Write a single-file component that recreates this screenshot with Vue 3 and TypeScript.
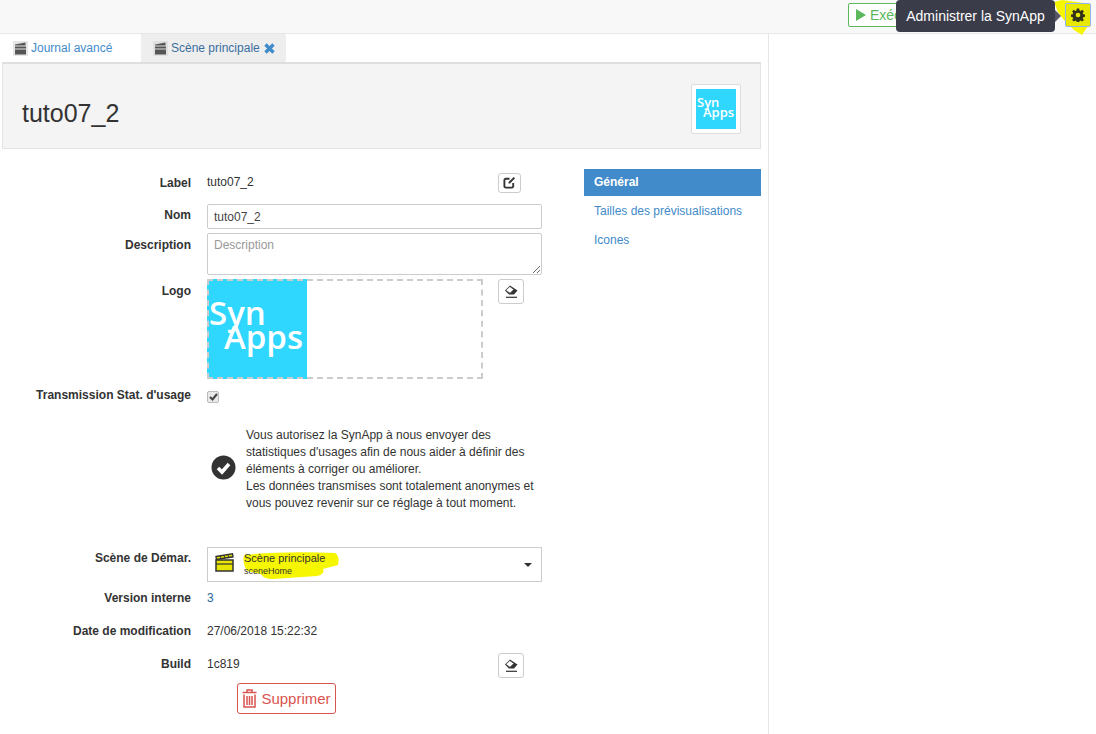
<script setup lang="ts">
const paragraphLines: string[] = [
  "Vous autorisez la SynApp à nous envoyer des",
  "statistiques d'usages afin de nous aider à définir des",
  "éléments à corriger ou améliorer.",
  "Les données transmises sont totalement anonymes et",
  "vous pouvez revenir sur ce réglage à tout moment.",
];
</script>

<template>
  <div class="page">
    <header class="topbar">
      <button class="run"><svg class="play" width="10" height="12" viewBox="0 0 10 12"><path d="M0 0L10 6L0 12Z" fill="#5cb85c" /></svg>Exécuter</button>
      <div class="tooltip">Administrer la SynApp</div>
      <button class="gear">
        <svg width="14" height="14" viewBox="0 0 24 24"><path fill="#33331a" fill-rule="evenodd" d="M10 1h4l.6 3.2 1.9.8 2.7-1.8 2.800 2.800-1.800 2.700.8 1.900 3 .6v4l-3 .6-.8 1.900 1.800 2.700-2.800 2.800-2.700-1.800-1.900.8-.6 3h-4l-.6-3-1.900-.8-2.700 1.800-2.800-2.800 1.800-2.700-.8-1.900-3-.6v-4l3-.6.8-1.900-1.800-2.700 2.800-2.800 2.700 1.800 1.900-.8zM12 8a4 4 0 100 8 4 4 0 000-8z" /></svg>
      </button>
      <svg class="mark-top" width="40" height="36" viewBox="0 0 40 36"><path d="M0 2L8 0L30 3L34 26L28 35L20 30L16 26L10 20L4 12Z" fill="#f6f600" /></svg>
    </header>

    <div class="body">
      <main class="main">
        <nav class="tabs">
          <a class="tab">
            <svg class="clap" width="15" height="15" viewBox="0 0 15 15"><rect width="15" height="15" fill="#e6e6e6" /><path d="M2 3.500L12.500 1.500V4.500H2zM2 5.500h11v8H2z" fill="#555" /><path d="M2 8h11" stroke="#e6e6e6" /></svg>
            Journal avancé
          </a>
          <a class="tab active">
            <svg class="clap" width="15" height="15" viewBox="0 0 15 15"><rect width="15" height="15" fill="#e0e0e0" /><path d="M2 3.500L12.500 1.500V4.500H2zM2 5.500h11v8H2z" fill="#555" /><path d="M2 8h11" stroke="#e0e0e0" /></svg>
            Scène principale
            <svg class="close" width="11" height="11" viewBox="0 0 11 11"><path d="M1.500 1.500L9.500 9.500M9.500 1.500L1.500 9.500" stroke="#428bca" stroke-width="3.400" /></svg>
          </a>
        </nav>

        <section class="hero">
          <h1>tuto07_2</h1>
          <div class="thumb"><div class="logo small"><span class="syn">Syn</span><span class="apps">Apps</span></div></div>
        </section>

        <div class="content">
          <form class="form" @submit.prevent>
            <div class="row r-label">
              <label>Label</label>
              <div class="val between">
                <span>tuto07_2</span>
                <button class="tool tool-sm">
                  <svg width="13" height="13" viewBox="0 0 14 14"><path d="M11 7.500V11a1.500 1.500 0 01-1.500 1.500H3A1.500 1.500 0 011.500 11V4.500A1.500 1.500 0 013 3h4" fill="none" stroke="#333" stroke-width="2" /><path d="M6 6.500L11.500 1l1.500 1.500L7.500 8H6z" fill="#333" /></svg>
                </button>
              </div>
            </div>
            <div class="row r-name">
              <label>Nom</label>
              <input class="field" value="tuto07_2" />
            </div>
            <div class="row r-desc">
              <label>Description</label>
              <textarea class="field area" placeholder="Description"></textarea>
            </div>
            <div class="row r-logo">
              <label>Logo</label>
              <div class="val between top">
                <div class="drop"><div class="logo big"><span class="syn">Syn</span><span class="apps">Apps</span></div></div>
                <button class="tool tool-lg">
                  <svg width="15" height="15" viewBox="0 0 15 15"><path d="M1 6.500L6 1.500L13.500 6.500L10 10.500H5Z" fill="#333" /><path d="M1.800 6.300L5.800 2.500L9.800 5.500L6 9.300Z" fill="#fff" stroke="#333" stroke-width=".6" /><path d="M2 13.300h11" stroke="#333" stroke-width="1.200" /></svg>
                </button>
              </div>
            </div>
            <div class="row r-stat">
              <label>Transmission Stat. d'usage</label>
              <div class="val"><span class="check">
                <svg width="9" height="8" viewBox="0 0 9 8"><path d="M1 4L3.500 6.500L8 1" fill="none" stroke="#444" stroke-width="2" /></svg>
              </span></div>
            </div>
            <div class="row r-info">
              <span></span>
              <div class="info">
                <svg class="round" width="25" height="25" viewBox="0 0 25 25"><circle cx="12.500" cy="12.500" r="12" fill="#333" /><path d="M7 13L11 17L18 9" fill="none" stroke="#fff" stroke-width="3.600" /></svg>
                <p><template v-for="line in paragraphLines" :key="line">{{ line }}<br /></template></p>
              </div>
            </div>
            <div class="row r-scene">
              <label>Scène de Démar.</label>
              <div class="select">
                <span class="scene-wrap">
                  <svg class="mark" width="98" height="28" viewBox="0 0 98 28"><path d="M1 3Q40 -1 92 1Q97 4 95 13L80 17Q82 22 74 24L30 27Q20 27 18 22L4 19Q-1 10 1 3Z" fill="#f6f600" /></svg>
                  <svg class="scene-ico" width="19" height="19" viewBox="0 0 19 19"><path d="M1 3.500L17.500 .8L18 3.800L1.500 6.500Z" fill="#e6e600" stroke="#333" stroke-width="1.400" /><path d="M5 3L6 5.500M9 2.500L10 5M13 2L14 4.500" stroke="#333" /><rect x="1" y="7" width="17" height="11" fill="#e6e600" stroke="#333" stroke-width="1.500" /><path d="M1 11h17" stroke="#333" stroke-width="1.200" /></svg>
                  <span class="scene-text"><b>Scène principale</b><small>sceneHome</small></span>
                </span>
                <i class="caret"></i>
              </div>
            </div>
            <div class="row r-ver"><label>Version interne</label><div class="val link">3</div></div>
            <div class="row r-date"><label>Date de modification</label><div class="val">27/06/2018 15:22:32</div></div>
            <div class="row r-build">
              <label>Build</label>
              <div class="val between top">
                <span class="build-no">1c819</span>
                <button class="tool tool-lg">
                  <svg width="15" height="15" viewBox="0 0 15 15"><path d="M1 6.500L6 1.500L13.500 6.500L10 10.500H5Z" fill="#333" /><path d="M1.800 6.300L5.800 2.500L9.800 5.500L6 9.300Z" fill="#fff" stroke="#333" stroke-width=".6" /><path d="M2 13.300h11" stroke="#333" stroke-width="1.200" /></svg>
                </button>
              </div>
            </div>
            <button class="danger">
              <svg width="15" height="19" viewBox="0 0 15 19"><path d="M5 3V1h5v2M.5 3.500h14M2 5.500V18h11V5.500M5 7v9M7.500 7v9M10 7v9" fill="none" stroke="#d9534f" stroke-width="1.500" /></svg>
              Supprimer
            </button>
          </form>

          <aside class="side">
            <a class="on">Général</a>
            <a>Tailles des prévisualisations</a>
            <a>Icones</a>
          </aside>
        </div>
      </main>
      <aside class="right"></aside>
    </div>
  </div>
</template>

<style>
html, body { margin: 0; background: #fff; }
</style>

<style scoped>
.page { width: 1096px; height: 734px; overflow: hidden; font: 12px/17px "Liberation Sans", Arial, sans-serif; color: #333; }
.topbar { position: relative; z-index: 2; height: 34px; box-sizing: border-box; background: #f8f8f8; border-bottom: 1px solid #e7e7e7; display: flex; align-items: flex-start; padding: 3px 5px 0 848px; }
.run { height: 24px; width: 70px; flex: none; padding: 0 0 0 7px; box-sizing: border-box; border: 1px solid #5cb85c; border-radius: 2px; background: #fff; color: #5cb85c; font: 14px "Liberation Sans", Arial, sans-serif; display: flex; align-items: center; gap: 4px; white-space: nowrap; overflow: hidden; }
.play { flex: none; }
.tooltip { position: absolute; left: 896px; top: 0; width: 159px; height: 32px; background: #3a3c4a; color: #fff; border-radius: 4px; font-size: 14px; line-height: 32px; text-align: center; z-index: 3; }
.tooltip::after { content: ""; position: absolute; left: 100%; top: 10px; border: 6px solid transparent; border-left-color: #3a3c4a; border-right-width: 0; opacity: .85; }
.gear { position: absolute; right: 5px; top: 3px; width: 26px; height: 24px; box-sizing: border-box; z-index: 2; padding: 0; display: flex; align-items: center; justify-content: center; background: #e8e800; border: 1px solid #8fb4ee; border-radius: 2px; }
.mark-top { position: absolute; left: 1054px; top: 0; z-index: 1; }
.body { display: flex; height: 700px; }
.main { width: 768px; flex: none; }
.right { flex: 1; border-left: 1px solid #e7e7e7; }
.tabs { height: 28px; display: flex; padding-left: 0; font-size: 12px; }
.tab { height: 28px; box-sizing: border-box; color: #428bca; display: flex; align-items: center; gap: 3px; padding: 0 13px; width: 141px; }
.tab.active { width: 145px; background: #eee; color: #3a6f9f; padding: 0 0 0 12px; }
.clap { flex: none; margin-top: 1px; }
.close { margin-left: 1px; }
.hero { margin: 0 7px 0 2px; height: 87px; box-sizing: border-box; background: #f4f4f4; border: 1px solid #e3e3e3; border-top: 2px solid #dedede; display: flex; align-items: center; justify-content: space-between; padding: 5px 19px 0 19px; }
h1 { margin: 0; font-size: 25px; line-height: 30px; font-weight: 400; padding-top: 9px; }
.thumb { width: 50px; height: 50px; box-sizing: border-box; background: #fff; border: 1px solid #ddd; padding: 4px; border-radius: 2px; }
.logo { background: #2fd7ff; color: #fff; font-family: "Open Sans", "Noto Sans", sans-serif; position: relative; }
.logo span { position: absolute; white-space: nowrap; line-height: .7; font-weight: 600; }
.logo.small { width: 40px; height: 40px; font-size: 13px; }
.small .syn { left: 1px; top: 9px; } .small .apps { left: 7px; top: 19px; }
.logo.big { width: 100px; height: 100px; font-size: 33px; }
.big .syn { left: 2px; top: 22px; } .big .apps { left: 17px; top: 46px; }
.content { display: flex; padding: 20px 7px 0 0; }
.form { width: 542px; flex: none; }
.side { margin-left: 42px; width: 177px; display: flex; flex-direction: column; }
.side a { height: 29px; padding-left: 10px; line-height: 28px; color: #428bca; }
.side a.on { height: 27px; line-height: 26px; background: #428bca; color: #fff; font-weight: 700; margin-bottom: 1px; }
.row { display: grid; grid-template-columns: 191px 335px; column-gap: 16px; box-sizing: border-box; }
.row label { text-align: right; font-weight: 700; white-space: nowrap; }
.val { min-width: 0; }
.between { display: flex; justify-content: space-between; align-items: center; padding-right: 18px; }
.between.top { align-items: flex-start; }
.r-label { height: 35px; padding-top: 5px; }
.r-label label { margin-top: 1px; }
.r-label .val { height: 17px; }
.r-name { height: 29px; }
.r-name label { margin-top: 3px; }
.r-desc { height: 46px; }
.r-desc label, .r-logo label { margin-top: 4px; }
.r-logo { height: 112px; }
.r-stat { height: 16px; }
.r-stat label { margin-top: -4px; }
.r-info { height: 140px; padding-top: 17px; }
.r-scene { height: 43px; }
.r-scene label { margin-top: 3px; }
.r-ver { height: 33px; }
.r-date { height: 30px; }
.r-build { height: 30px; }
.r-build label { margin-top: 3px; }
.build-no { margin-top: 3px; }
.field { width: 335px; height: 25px; box-sizing: border-box; border: 1px solid #ccc; border-radius: 2px; padding: 0 6px; font: 12px "Liberation Sans", Arial, sans-serif; color: #444; outline: none; background: #fff; display: block; }
.area { height: 42px; padding: 4px 6px; margin: 0; }
.area::placeholder { color: #999; opacity: 1; }
.tool { box-sizing: border-box; padding: 0; background: #fff; border: 1px solid #ccc; border-radius: 3px; display: flex; align-items: center; justify-content: center; flex: none; }
.tool-sm { width: 23px; height: 20px; margin-right: 3px; }
.tool-lg { width: 26px; height: 25px; }
.drop { width: 276px; height: 100px; box-sizing: border-box; position: relative; }
.drop::after { content: ""; position: absolute; inset: 0; border: 2px dashed #ccc; }
.check { width: 12px; height: 12px; box-sizing: border-box; display: flex; align-items: center; justify-content: center; background: #e9e9e9; border: 1px solid #bbb; border-radius: 2px; }
.info { display: flex; align-items: center; gap: 10px; padding-left: 4px; height: 90px; }
.round { flex: none; margin-top: -4px; }
.info p { margin: 0; width: 300px; font-size: 12px; line-height: 17px; white-space: nowrap; }
.select { width: 335px; height: 35px; box-sizing: border-box; border: 1px solid #ccc; display: flex; align-items: center; justify-content: space-between; padding: 0 9px 0 7px; }
.scene-wrap { position: relative; display: flex; align-items: center; gap: 10px; }
.mark { position: absolute; left: 28px; top: 0; }
.scene-ico { position: relative; margin-top: -5px; }
.scene-text { position: relative; display: flex; flex-direction: column; margin-top: -1px; }
.scene-text b { font-weight: 400; font-size: 11px; line-height: 14px; }
.scene-text small { font-size: 9px; line-height: 12px; }
.caret { width: 0; height: 0; border: 4px solid transparent; border-top-color: #333; border-bottom-width: 0; }
.link { color: #2a6496; }
.danger { margin: 0 0 0 237px; width: 99px; height: 31px; box-sizing: border-box; background: #fff; border: 1px solid #d9534f; border-radius: 3px; color: #d9534f; font: 15px "Liberation Sans", Arial, sans-serif; display: flex; align-items: center; justify-content: center; gap: 4px; padding: 0; white-space: nowrap; }
</style>
